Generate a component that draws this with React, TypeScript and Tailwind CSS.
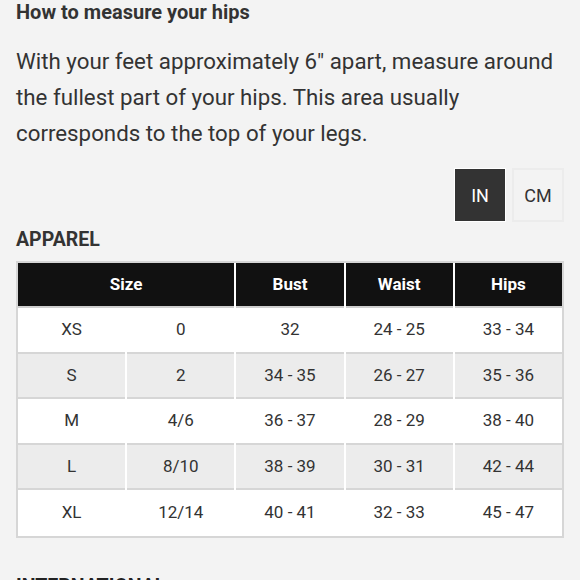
const rows = [
  ["XS", "0", "32", "24 - 25", "33 - 34"],
  ["S", "2", "34 - 35", "26 - 27", "35 - 36"],
  ["M", "4/6", "36 - 37", "28 - 29", "38 - 40"],
  ["L", "8/10", "38 - 39", "30 - 31", "42 - 44"],
  ["XL", "12/14", "40 - 41", "32 - 33", "45 - 47"],
]

export default function App() {
  return (
    <div
      className="w-[580px] h-[580px] overflow-hidden bg-[#f3f3f3] text-[#333] px-4"
      style={{ fontFamily: "Roboto, 'Liberation Sans', sans-serif" }}
    >
      <h2 className="text-[20px] font-bold leading-[24px] text-[#333]">How to measure your hips</h2>
      <p className="mt-[19px] text-[22.3px] leading-[36px] text-[#333]">
        With your feet approximately 6" apart, measure around the fullest part of your hips. This area usually
        corresponds to the top of your legs.
      </p>
      <div className="flex justify-end gap-[6px] mt-[17px]">
        <button className="w-[52px] h-[54px] bg-[#333] text-white text-[18px] border border-white">IN</button>
        <button className="w-[52px] h-[54px] bg-[#f3f3f3] text-[#333] text-[18px] border-2 border-[#ececec]">
          CM
        </button>
      </div>
      <h3 className="mt-[6px] text-[19.5px] font-bold leading-[24px] text-[#333]">APPAREL</h3>
      <SizeTable />
      <h3 className="mt-[37px] text-[19.5px] font-bold leading-[24px] text-[#222]">INTERNATIONAL</h3>
    </div>
  )
}

function SizeTable() {
  return (
    <div className="mt-[9px] border-2 border-[#d6d6d6] bg-white">
      <div className="grid grid-cols-5 gap-x-[2px]">
        <HeadCell text="Size" wide />
        <HeadCell text="Bust" />
        <HeadCell text="Waist" />
        <HeadCell text="Hips" />
      </div>
      {rows.map((row, i) => (
        <div key={row[0]} className="grid grid-cols-5 gap-x-[2px]">
          {row.map((v, j) => (
            <div
              key={j}
              className={`h-[45.5px] flex items-center justify-center text-[17px] text-[#333] ${
                i % 2 === 1 ? "bg-[#ececec]" : "bg-white"
              } ${i < rows.length - 1 ? "border-b-2 border-[#d6d6d6]" : ""}`}
            >
              {v}
            </div>
          ))}
        </div>
      ))}
    </div>
  )
}

function HeadCell({ text, wide }: { text: string; wide?: boolean }) {
  return (
    <div
      className={`h-[45px] flex items-center justify-center bg-[#111] text-white font-bold text-[17px] border-b-2 border-[#cfcfcf] ${
        wide ? "col-span-2" : ""
      }`}
    >
      {text}
    </div>
  )
}
